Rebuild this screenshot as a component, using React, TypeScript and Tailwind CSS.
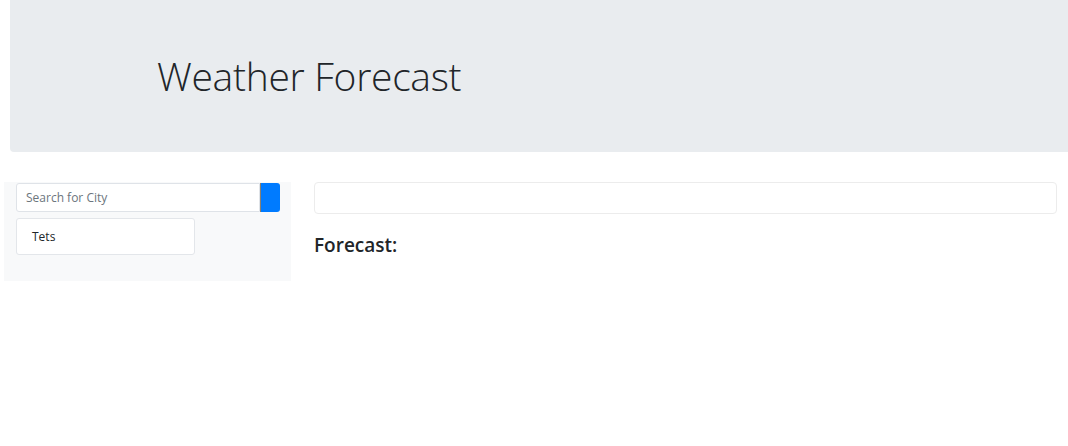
import React from "react";

export default function App() {
  return (
    <div className="w-[1068px] h-[446px] overflow-hidden bg-white" style={{ fontFamily: '"Open Sans", "Noto Sans", sans-serif' }}>
      <div className="ml-[10px] w-[1070px] h-[152px] bg-[#e9ecef] rounded-bl-[4px] flex items-center pl-[147px]">
        <h1 className="text-[39px] font-light text-[#212529] leading-none tracking-[-0.3px] mt-[-1px]">Weather Forecast</h1>
      </div>
      <div className="flex mt-[30px]">
        <div className="ml-[4px] w-[287px] h-[99px] bg-[#f8f9fa] pl-[12px] pr-[11px]">
          <div className="flex h-[29px] mt-[1px]">
            <div className="flex-1 h-full border border-[#dfe3e8] rounded-l-[3px] bg-white flex items-center pl-[9px] text-[12px] text-[#6c757d]">
              Search for City
            </div>
            <div className="w-[20px] h-full bg-[#007bff] border-l border-[#8a8070] rounded-r-[3px]" />
          </div>
          <div className="mt-[6px] w-[179px] h-[37px] bg-white border border-[#e3e6ea] rounded-[3px] flex items-center pl-[15px] text-[12px] text-[#212529]">
            Tets
          </div>
        </div>
        <div className="ml-[23px] w-[743px]">
          <div className="h-[32px] border border-[#ececec] rounded-[4px]" />
          <h4 className="mt-[22px] text-[19px] font-semibold text-[#212529] leading-none">Forecast:</h4>
        </div>
      </div>
    </div>
  );
}
